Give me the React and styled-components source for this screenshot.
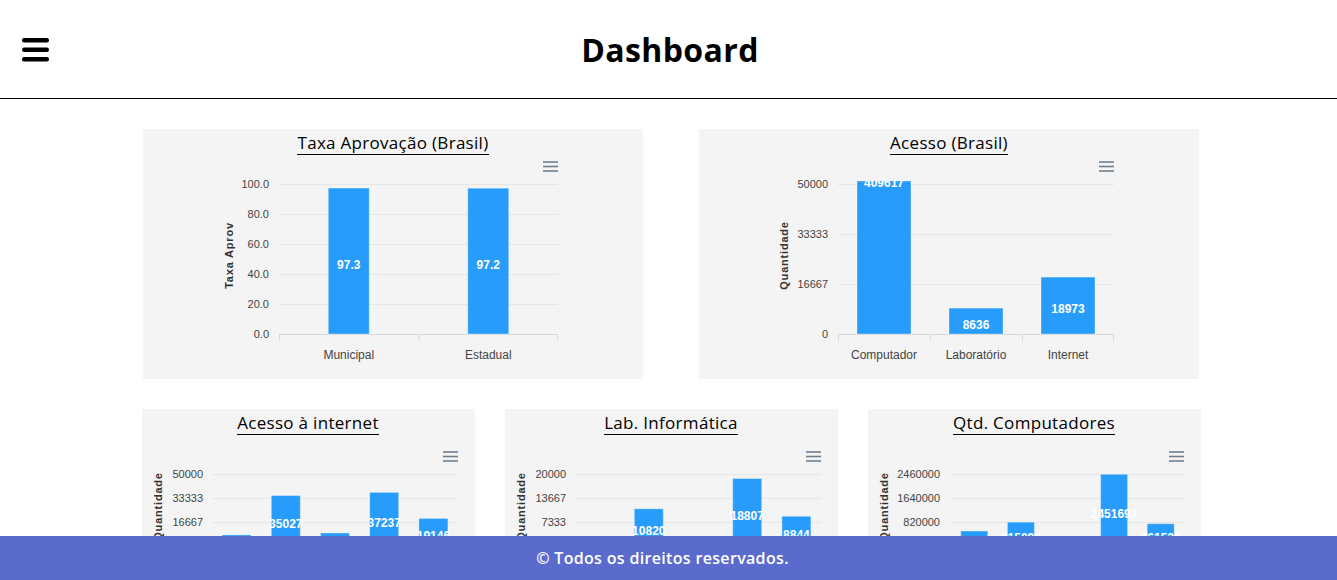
import React, { useId } from "react";
import styled, { createGlobalStyle } from "styled-components";

const BLUE = "#289cfa";
const REGIONS = ["N", "NE", "CO", "SE", "S"];

const charts = {
  taxa: {
    title: "Taxa Aprovação (Brasil)",
    width: 500, height: 250, top: 55, bottom: 205, left: 136, right: 415,
    min: 0, max: 100, ticks: [0, 20, 40, 60, 80, 100], fmt: (v) => v.toFixed(1),
    labelX: 126, titleX: 90, yTitle: "Taxa Aprov", menuY: 33, barW: 41,
    cats: ["Municipal", "Estadual"], data: [97.3, 97.2],
  },
  acesso: {
    title: "Acesso (Brasil)",
    width: 500, height: 250, top: 55, bottom: 205, left: 139, right: 415,
    min: 0, max: 50000, ticks: [0, 16667, 33333, 50000],
    labelX: 129, titleX: 89, yTitle: "Quantidade", menuY: 33, barW: 54,
    clipTop: 52, cats: ["Computador", "Laboratório", "Internet"],
    data: [409617, 8636, 18973], labelY: { 0: 57.5 },
  },
  internet: {
    title: "Acesso à internet",
    width: 333, height: 200, top: 65, bottom: 137, left: 70, right: 316,
    min: 0, max: 50000, ticks: [0, 16667, 33333, 50000],
    labelX: 61, titleX: 20, yTitle: "Quantidade", menuY: 43, barW: 29,
    cats: REGIONS, data: [7712, 35027, 9034, 37237, 19146],
  },
  lab: {
    title: "Lab. Informática",
    width: 333, height: 200, top: 65, bottom: 137, left: 70, right: 316,
    min: 1000, max: 20000, ticks: [1000, 7333, 13667, 20000],
    labelX: 61, titleX: 20, yTitle: "Quantidade", menuY: 43, barW: 29,
    cats: REGIONS, data: [2140, 10820, 1875, 18807, 8844],
  },
  computadores: {
    title: "Qtd. Computadores",
    width: 333, height: 200, top: 65, bottom: 137, left: 83, right: 316,
    min: 0, max: 2460000, ticks: [0, 820000, 1640000, 2460000],
    labelX: 72, titleX: 20, yTitle: "Quantidade", menuY: 43, barW: 27,
    cats: REGIONS, data: [512430, 815098, 182530, 2451692, 761520],
  },
};

const TITLE_H = 26;

const BarChart = ({ cfg }) => {
  const clipId = useId().replace(/:/g, "");
  const { width, height, top, bottom, left, right, min, max, ticks, cats, data } = cfg;
  const fmt = cfg.fmt || ((v) => String(v));
  const scale = (v) => bottom - ((v - min) / (max - min)) * (bottom - top);
  const step = (right - left) / cats.length;
  const clipTop = cfg.clipTop ?? 0;

  return (
    <svg
      width={width}
      height={height - TITLE_H}
      viewBox={`0 ${TITLE_H} ${width} ${height - TITLE_H}`}
      style={{ display: "block" }}
    >
      <defs>
        <clipPath id={clipId}>
          <rect x={left} y={clipTop} width={right - left} height={bottom - clipTop + 40} />
        </clipPath>
      </defs>

      {/* export menu button */}
      {[0, 4.5, 9].map((d) => (
        <line key={d} x1={right - 15} x2={right} y1={cfg.menuY + d} y2={cfg.menuY + d} stroke="#6f7f90" strokeWidth="1.6" />
      ))}

      {ticks.map((t) => (
        <g key={t}>
          <line x1={left} x2={right} y1={Math.round(scale(t)) + 0.5} y2={Math.round(scale(t)) + 0.5} stroke="#e6e6e6" />
          <text x={cfg.labelX} y={scale(t) + 4} textAnchor="end" fontSize="11" fill="#444">
            {fmt(t)}
          </text>
        </g>
      ))}

      <line x1={left} x2={right} y1={bottom + 0.5} y2={bottom + 0.5} stroke="#d6d9df" />
      {cats.map((_, i) => (
        <line key={i} x1={left + step * i + 0.5} x2={left + step * i + 0.5} y1={bottom} y2={bottom + 7} stroke="#d6d9df" />
      ))}
      <line x1={right - 0.5} x2={right - 0.5} y1={bottom} y2={bottom + 7} stroke="#d6d9df" />

      <text
        transform={`translate(${cfg.titleX} ${(top + bottom) / 2 - 3.5}) rotate(-90)`}
        textAnchor="middle"
        fontSize="11"
        fontWeight="700"
        letterSpacing="0.8"
        fill="#333"
      >
        {cfg.yTitle}
      </text>

      <g clipPath={`url(#${clipId})`}>
        {data.map((v, i) => {
          const cx = left + step * (i + 0.5);
          const y = Math.max(scale(v), clipTop);
          const ly = cfg.labelY && cfg.labelY[i] != null ? cfg.labelY[i] : (y + bottom) / 2 + 7.5;
          return (
            <g key={i}>
              <rect
                x={cx - cfg.barW / 2}
                y={y}
                width={cfg.barW}
                height={bottom - y}
                fill={BLUE}
                stroke="rgba(255,255,255,0.35)"
                strokeWidth="1"
              />
              <text x={cx} y={ly} textAnchor="middle" fontSize="12" fontWeight="700" fill="#fff">
                {fmt(v)}
              </text>
            </g>
          );
        })}
      </g>

      {cats.map((c, i) => (
        <text key={c} x={left + step * (i + 0.5)} y={bottom + 25} textAnchor="middle" fontSize="12" fill="#444">
          {c}
        </text>
      ))}
    </svg>
  );
};

const ChartCard = ({ cfg }) => (
  <Card $h={cfg.height}>
    <CardTitle>{cfg.title}</CardTitle>
    <BarChart cfg={cfg} />
  </Card>
);

const App = () => (
  <>
    <GlobalStyle />
    <Header>
      <MenuButton>
        <svg width="27" height="24" viewBox="0 0 27 24">
          <rect x="0" y="0" width="27" height="4.4" rx="2.2" fill="#000" />
          <rect x="0" y="9.5" width="27" height="4.4" rx="2.2" fill="#000" />
          <rect x="0" y="19" width="27" height="4.4" rx="2.2" fill="#000" />
        </svg>
      </MenuButton>
      <PageTitle>Dashboard</PageTitle>
      <span />
    </Header>
    <Main>
      <Row $cols={2} $w={500} $gap={56}>
        <ChartCard cfg={charts.taxa} />
        <ChartCard cfg={charts.acesso} />
      </Row>
      <Row $cols={3} $w={333} $gap={30}>
        <ChartCard cfg={charts.internet} />
        <ChartCard cfg={charts.lab} />
        <ChartCard cfg={charts.computadores} />
      </Row>
    </Main>
    <Footer>© Todos os direitos reservados.</Footer>
  </>
);

const GlobalStyle = createGlobalStyle`
  body {
    margin: 0;
    background: #fff;
    font-family: "Open Sans", "Liberation Sans", sans-serif;
  }
  svg text {
    font-family: "Liberation Sans", Arial, sans-serif;
  }
`;

const Header = styled.header`
  display: grid;
  grid-template-columns: 1fr auto 1fr;
  align-items: center;
  height: 99px;
  box-sizing: border-box;
  padding: 0 22px;
  border-bottom: 1px solid #000;
`;

const MenuButton = styled.div`
  display: flex;
  align-items: center;
  padding-top: 1px;
  cursor: pointer;
`;

const PageTitle = styled.h1`
  margin: 0;
  padding-left: 3px;
  font-family: "Open Sans", sans-serif;
  font-size: 32px;
  font-weight: 700;
  color: #000;
  letter-spacing: 0.4px;
`;

const Main = styled.main`
  display: flex;
  flex-direction: column;
  align-items: center;
  gap: 30px;
  padding: 30px 0 60px 5px;
`;

const Row = styled.div`
  display: grid;
  grid-template-columns: repeat(${(p) => p.$cols}, ${(p) => p.$w}px);
  gap: ${(p) => p.$gap}px;
`;

const Card = styled.div`
  display: flex;
  flex-direction: column;
  align-items: center;
  height: ${(p) => p.$h}px;
  background: #f4f4f4;
  overflow: hidden;
`;

const CardTitle = styled.h3`
  margin: 2px 0 0;
  font-family: "Open Sans", sans-serif;
  font-size: 17px;
  font-weight: 400;
  line-height: 23px;
  letter-spacing: 0.3px;
  color: #000;
  border-bottom: 1px solid #000;
`;

const Footer = styled.footer`
  position: fixed;
  left: 0;
  right: 0;
  bottom: 0;
  height: 44px;
  display: flex;
  align-items: center;
  justify-content: center;
  padding-right: 12px;
  background: #5b6bcd;
  color: #fff;
  font-family: "Open Sans", sans-serif;
  font-size: 16px;
  font-weight: 600;
  letter-spacing: 0.33px;
`;

export default App;
